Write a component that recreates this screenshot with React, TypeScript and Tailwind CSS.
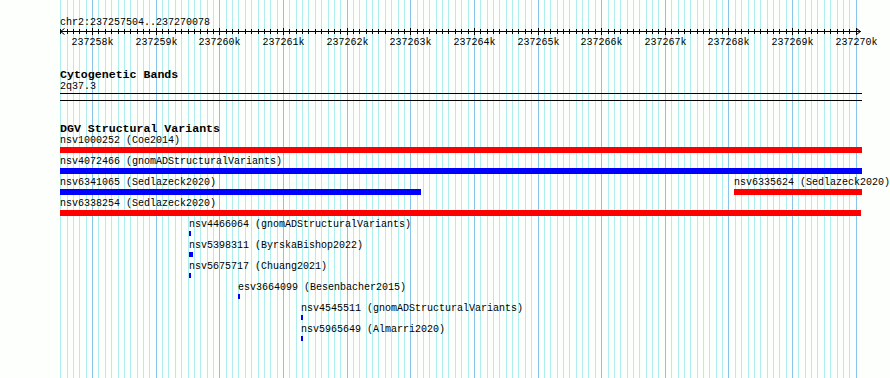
import React from "react";

type Feat = { x: number; w: number; h: number; color: string; label: string };

const rows: Feat[][] = [
  [{ x: 60, w: 802, h: 6, color: "#ff0000", label: "nsv1000252 (Coe2014)" }],
  [{ x: 60, w: 802, h: 6, color: "#0000ff", label: "nsv4072466 (gnomADStructuralVariants)" }],
  [
    { x: 60, w: 361, h: 6, color: "#0000ff", label: "nsv6341065 (Sedlazeck2020)" },
    { x: 734, w: 128, h: 6, color: "#ff0000", label: "nsv6335624 (Sedlazeck2020)" },
  ],
  [{ x: 60, w: 801, h: 6, color: "#ff0000", label: "nsv6338254 (Sedlazeck2020)" }],
  [{ x: 189, w: 2, h: 5, color: "#0000ff", label: "nsv4466064 (gnomADStructuralVariants)" }],
  [{ x: 189, w: 4, h: 5, color: "#0000ff", label: "nsv5398311 (ByrskaBishop2022)" }],
  [{ x: 189, w: 2, h: 5, color: "#0000ff", label: "nsv5675717 (Chuang2021)" }],
  [{ x: 238, w: 2, h: 5, color: "#0000ff", label: "esv3664099 (Besenbacher2015)" }],
  [{ x: 301, w: 2, h: 5, color: "#0000ff", label: "nsv4545511 (gnomADStructuralVariants)" }],
  [{ x: 301, w: 2, h: 5, color: "#0000ff", label: "nsv5965649 (Almarri2020)" }],
];

const gridXs = Array.from({ length: 126 }, (_, k) => Math.round(60.3 + k * 6.363));
const isMajor = (k: number) => k >= 5 && (k - 5) % 10 === 0;

function Grid() {
  return (
    <svg className="absolute inset-0" width={890} height={378} shapeRendering="crispEdges">
      {gridXs.map((x, k) => (
        <rect key={k} x={x} y={0} width={1} height={378} fill={isMajor(k) ? "#87c6ea" : "#afeeee"} />
      ))}
    </svg>
  );
}

function Ruler() {
  const majors = gridXs.map((x, k) => ({ x, k })).filter((d) => isMajor(d.k));
  return (
    <svg className="block" width={890} height={20}>
      <g shapeRendering="crispEdges">
        <rect x={60} y={3} width={801} height={1} fill="#000" />
        {gridXs.map((x, k) =>
          isMajor(k) ? (
            <rect key={k} x={x} y={0} width={1} height={7} fill="#000" />
          ) : (
            <rect key={k} x={x} y={1} width={1} height={5} fill="#000" />
          )
        )}
      </g>
      <polyline points="64.5,0.5 60.5,3.5 64.5,6.5" fill="none" stroke="#000" strokeWidth={1} />
      <polyline points="856.5,0.5 860.5,3.5 856.5,6.5" fill="none" stroke="#000" strokeWidth={1} />
      {majors.map((d, i) => (
        <text
          key={i}
          x={d.x + 0.5}
          y={17}
          textAnchor="middle"
          fontFamily="'Liberation Mono', monospace"
          fontSize={10}
          fill="#000"
        >
          {`${237258 + i}k`}
        </text>
      ))}
    </svg>
  );
}

export default function App() {
  return (
    <div className="relative w-[890px] h-[378px] overflow-hidden bg-[#fcfffc]">
      <Grid />
      <div className="relative flex flex-col pt-[17px] font-['Liberation_Mono',monospace] text-[10px] leading-[11px] text-black">
        <div className="h-[11px] pl-[60px] whitespace-nowrap">chr2:237257504..237270078</div>
        <Ruler />
        <div className="mt-[20px] h-[13px] pl-[60px] text-[11.6px] leading-[13px] font-bold whitespace-nowrap">
          Cytogenetic Bands
        </div>
        <div className="h-[11px] pl-[60px]">2q37.3</div>
        <div className="ml-[60px] mt-[1px] h-[1px] w-[802px] bg-black" />
        <div className="ml-[60px] mt-[6px] h-[1px] w-[802px] bg-black" />
        <div className="mt-[21px] h-[13px] pl-[60px] text-[11.6px] leading-[13px] font-bold whitespace-nowrap">
          DGV Structural Variants
        </div>
        {rows.map((row, i) => (
          <div key={i} className="relative h-[21px]">
            {row.map((f, j) => (
              <div key={j} className="absolute top-0 flex flex-col" style={{ left: f.x }}>
                <div className="h-[12px] whitespace-nowrap">{f.label}</div>
                <div style={{ width: f.w, height: f.h, backgroundColor: f.color }} />
              </div>
            ))}
          </div>
        ))}
      </div>
    </div>
  );
}
